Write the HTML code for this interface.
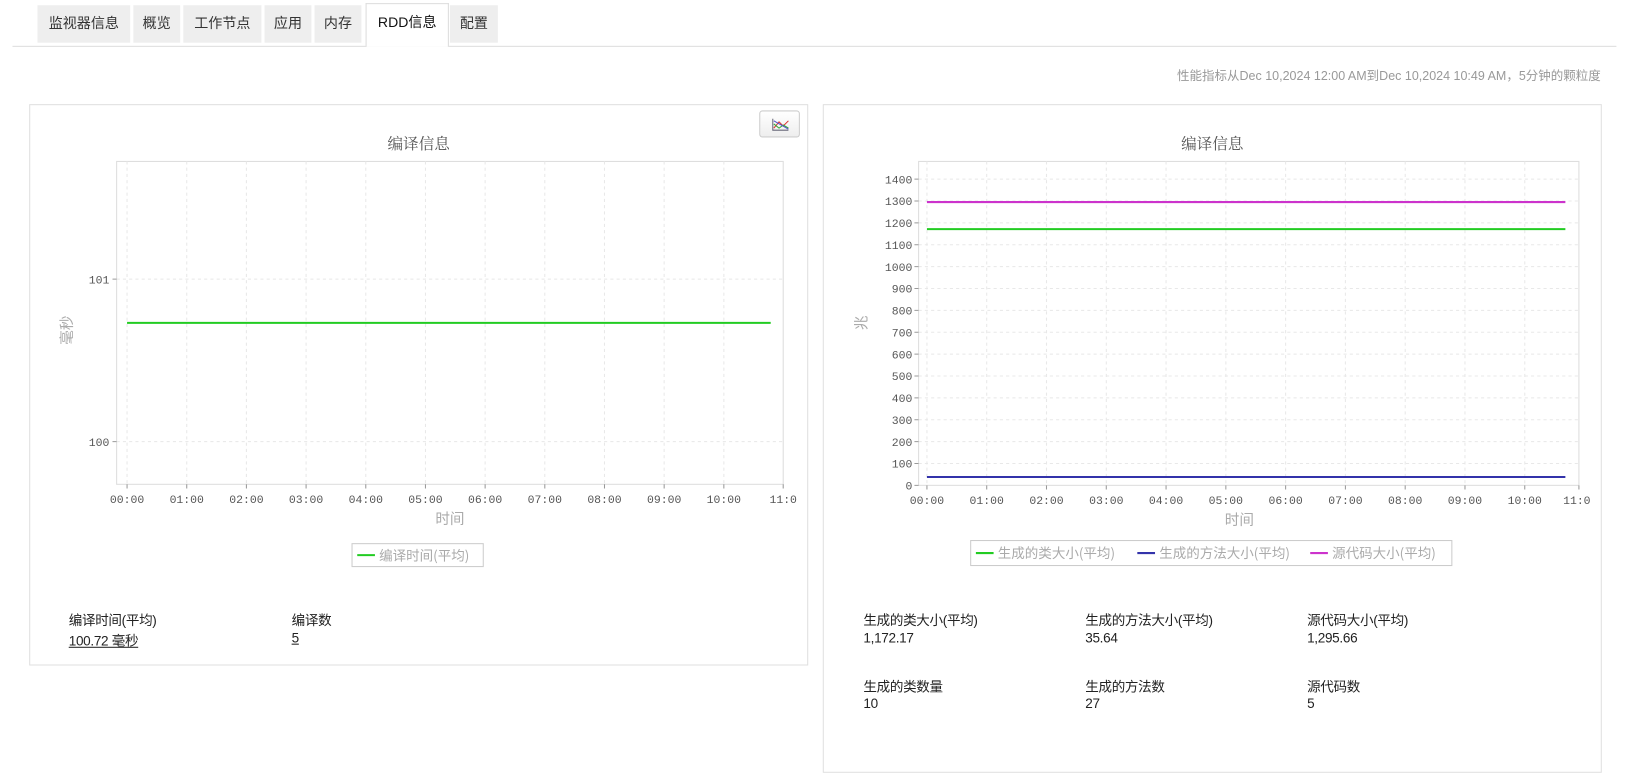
<!DOCTYPE html>
<html><head><meta charset="utf-8"><style>
body{margin:0;background:#fff;width:1630px;height:719px;overflow:hidden;font-family:"Liberation Sans","Noto Sans CJK SC",sans-serif;}
#w{position:absolute;left:0;top:0;width:1565px;height:690px;transform:scale(1.0415);transform-origin:0 0;}
.a{position:absolute;}
.tab{position:absolute;top:5px;height:36px;background:#eee;font-size:13.5px;color:#333;line-height:36px;text-align:center;}
.tab.on{background:#fff;border:1px solid #ddd;border-bottom:none;top:3px;height:41px;color:#111;}
.p{position:absolute;border:1px solid #e0e0e0;background:#fff}
.s{position:absolute;font-size:13px;color:#222;letter-spacing:-0.3px}
svg text{font-family:"Liberation Mono","DejaVu Sans Mono",monospace;}
</style></head><body><div id="w">
<div class="a" style="left:12px;top:44px;width:1540px;height:1px;background:#ddd"></div>
<div class="tab" style="left:36px;width:89px">监视器信息</div>
<div class="tab" style="left:128px;width:45px">概览</div>
<div class="tab" style="left:176px;width:75px">工作节点</div>
<div class="tab" style="left:254px;width:45px">应用</div>
<div class="tab" style="left:302px;width:45px">内存</div>
<div class="tab on" style="left:351px;width:78px">RDD信息</div>
<div class="tab" style="left:432px;width:46px">配置</div>
<div class="a" style="right:28px;top:64px;font-size:12px;color:#999">性能指标从Dec 10,2024 12:00 AM到Dec 10,2024 10:49 AM，5分钟的颗粒度</div>
<div class="p" style="left:28px;top:100px;width:746px;height:537px"></div>
<div class="p" style="left:790px;top:100px;width:746px;height:640px"></div>
<div class="a" style="left:729px;top:106px;width:37px;height:24px;border:1px solid #ccc;border-radius:3px;background:linear-gradient(#fff,#eee)">
<svg width="37" height="24"><path d="M12 7v11h15" stroke="#667" fill="none"/><path d="M13 16l5-6 4 4 5-5" stroke="#d33" fill="none"/><path d="M13 12l5 4 4-3 5 3" stroke="#3a3" fill="none"/><path d="M13 9l14 8" stroke="#55c" fill="none"/></svg></div>
<svg class="a" style="left:0;top:0" width="1565" height="690">
<g font-size="15" fill="#555" text-anchor="middle">
<text x="402" y="143" style="font-family:'Noto Serif CJK SC',serif">编译信息</text>
<text x="1164" y="143" style="font-family:'Noto Serif CJK SC',serif">编译信息</text></g>
<rect x="112" y="155" width="640" height="310" fill="#fff" stroke="#ddd"/>
<g stroke="#e8e8e8" stroke-dasharray="3,3">
<path d="M122 155V465M179.3 155V465M236.6 155V465M293.9 155V465M351.2 155V465M408.5 155V465M465.8 155V465M523.1 155V465M580.4 155V465M637.7 155V465M695 155V465M112 268H752M112 424H752"/></g>
<g stroke="#999"><path d="M108 268h4M108 424h4M122 465v4M179.3 465v4M236.6 465v4M293.9 465v4M351.2 465v4M408.5 465v4M465.8 465v4M523.1 465v4M580.4 465v4M637.7 465v4M695 465v4M752 465v4"/></g>
<line x1="122" y1="310" x2="740" y2="310" stroke="#2c2" stroke-width="2"/>
<g font-size="11" fill="#555" text-anchor="end"><text x="105" y="272">101</text><text x="105" y="428">100</text></g>
<g font-size="11" fill="#555" text-anchor="middle">
<text x="122" y="483">00:00</text><text x="179.3" y="483">01:00</text><text x="236.6" y="483">02:00</text><text x="293.9" y="483">03:00</text><text x="351.2" y="483">04:00</text><text x="408.5" y="483">05:00</text><text x="465.8" y="483">06:00</text><text x="523.1" y="483">07:00</text><text x="580.4" y="483">08:00</text><text x="637.7" y="483">09:00</text><text x="695" y="483">10:00</text><text x="752" y="483">11:0</text></g>
<text x="432" y="503" font-size="14" fill="#aaa" text-anchor="middle" style="font-family:'Noto Sans CJK SC',sans-serif">时间</text>
<text transform="translate(69,317) rotate(-90)" font-size="14" fill="#aaa" text-anchor="middle" style="font-family:'Noto Sans CJK SC',sans-serif">毫秒</text>
<rect x="338" y="522" width="126" height="22" fill="#fff" stroke="#ccc"/>
<line x1="343" y1="533" x2="360" y2="533" stroke="#2c2" stroke-width="2"/>
<text x="364" y="538" font-size="13" fill="#aaa" style="font-family:'Noto Sans CJK SC',sans-serif">编译时间(平均)</text>

<rect x="882" y="155" width="634" height="311" fill="#fff" stroke="#ddd"/>
<g stroke="#e8e8e8" stroke-dasharray="3,3">
<path d="M890 155V466M947.4 155V466M1004.8 155V466M1062.2 155V466M1119.6 155V466M1177 155V466M1234.4 155V466M1291.8 155V466M1349.2 155V466M1406.6 155V466M1464 155V466"/>
<path d="M882 445H1516M882 424H1516M882 403H1516M882 382H1516M882 361H1516M882 340H1516M882 319H1516M882 298H1516M882 277H1516M882 256H1516M882 235H1516M882 214H1516M882 193H1516M882 172H1516"/></g>
<g stroke="#999"><path d="M878 466h4M878 445h4M878 424h4M878 403h4M878 382h4M878 361h4M878 340h4M878 319h4M878 298h4M878 277h4M878 256h4M878 235h4M878 214h4M878 193h4M878 172h4M890 466v4M947.4 466v4M1004.8 466v4M1062.2 466v4M1119.6 466v4M1177 466v4M1234.4 466v4M1291.8 466v4M1349.2 466v4M1406.6 466v4M1464 466v4M1516 466v4"/></g>
<line x1="890" y1="194" x2="1503" y2="194" stroke="#c3c" stroke-width="2"/>
<line x1="890" y1="220" x2="1503" y2="220" stroke="#2c2" stroke-width="2"/>
<line x1="890" y1="458" x2="1503" y2="458" stroke="#33a" stroke-width="2"/>
<g font-size="11" fill="#555" text-anchor="end">
<text x="876" y="470">0</text><text x="876" y="449">100</text><text x="876" y="428">200</text><text x="876" y="407">300</text><text x="876" y="386">400</text><text x="876" y="365">500</text><text x="876" y="344">600</text><text x="876" y="323">700</text><text x="876" y="302">800</text><text x="876" y="281">900</text><text x="876" y="260">1000</text><text x="876" y="239">1100</text><text x="876" y="218">1200</text><text x="876" y="197">1300</text><text x="876" y="176">1400</text></g>
<g font-size="11" fill="#555" text-anchor="middle">
<text x="890" y="484">00:00</text><text x="947.4" y="484">01:00</text><text x="1004.8" y="484">02:00</text><text x="1062.2" y="484">03:00</text><text x="1119.6" y="484">04:00</text><text x="1177" y="484">05:00</text><text x="1234.4" y="484">06:00</text><text x="1291.8" y="484">07:00</text><text x="1349.2" y="484">08:00</text><text x="1406.6" y="484">09:00</text><text x="1464" y="484">10:00</text><text x="1514" y="484">11:0</text></g>
<text x="1190" y="504" font-size="14" fill="#aaa" text-anchor="middle" style="font-family:'Noto Sans CJK SC',sans-serif">时间</text>
<text transform="translate(832,310) rotate(-90)" font-size="14" fill="#aaa" text-anchor="middle" style="font-family:'Noto Sans CJK SC',sans-serif">兆</text>
<rect x="932" y="519" width="462" height="24" fill="#fff" stroke="#ccc"/>
<g font-size="13" fill="#aaa">
<line x1="937" y1="531" x2="954" y2="531" stroke="#2c2" stroke-width="2"/><text x="958" y="536" style="font-family:'Noto Sans CJK SC',sans-serif">生成的类大小(平均)</text>
<line x1="1092" y1="531" x2="1109" y2="531" stroke="#33a" stroke-width="2"/><text x="1113" y="536" style="font-family:'Noto Sans CJK SC',sans-serif">生成的方法大小(平均)</text>
<line x1="1258" y1="531" x2="1275" y2="531" stroke="#c3c" stroke-width="2"/><text x="1279" y="536" style="font-family:'Noto Sans CJK SC',sans-serif">源代码大小(平均)</text></g>
</svg>
<div class="s" style="left:66px;top:585px">编译时间(平均)</div>
<div class="s" style="left:66px;top:605px;text-decoration:underline">100.72 毫秒</div>
<div class="s" style="left:280px;top:585px">编译数</div>
<div class="s" style="left:280px;top:605px;text-decoration:underline">5</div>
<div class="s" style="left:829px;top:585px">生成的类大小(平均)</div>
<div class="s" style="left:829px;top:605px">1,172.17</div>
<div class="s" style="left:1042px;top:585px">生成的方法大小(平均)</div>
<div class="s" style="left:1042px;top:605px">35.64</div>
<div class="s" style="left:1255px;top:585px">源代码大小(平均)</div>
<div class="s" style="left:1255px;top:605px">1,295.66</div>
<div class="s" style="left:829px;top:649px">生成的类数量</div>
<div class="s" style="left:829px;top:668px">10</div>
<div class="s" style="left:1042px;top:649px">生成的方法数</div>
<div class="s" style="left:1042px;top:668px">27</div>
<div class="s" style="left:1255px;top:649px">源代码数</div>
<div class="s" style="left:1255px;top:668px">5</div>
</div></body></html>
